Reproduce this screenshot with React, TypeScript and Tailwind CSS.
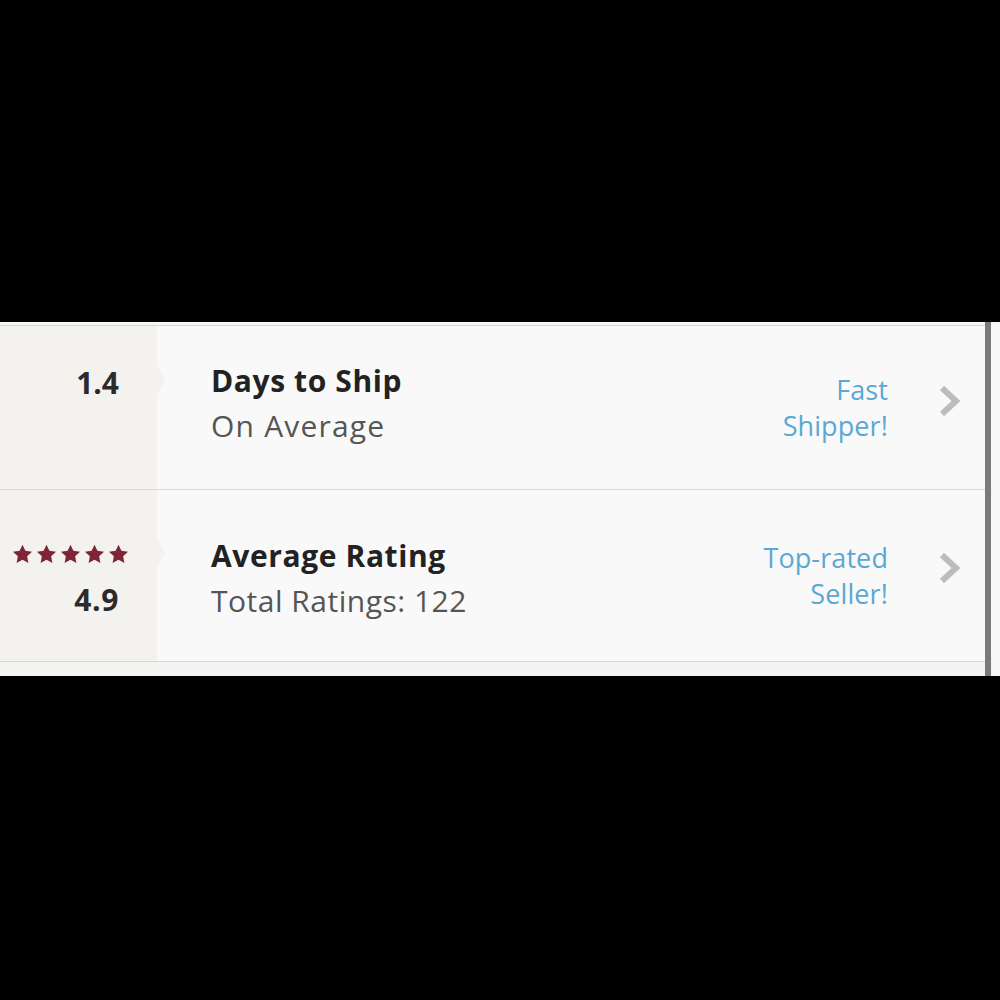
const STARS = [0, 1, 2, 3, 4];

function Star() {
  return (
    <svg width="21" height="20" viewBox="0 0 24 23" className="shrink-0">
      <path
        d="M12 0.8l3.3 7.1 7.7 0.9-5.7 5.3 1.5 7.7L12 18l-6.8 3.8 1.5-7.7L1 8.8l7.7-0.9z"
        fill="#7d2638"
      />
    </svg>
  );
}

function Chevron() {
  return (
    <svg width="24" height="34" viewBox="0 0 24 34" className="shrink-0">
      <polyline
        points="4,4 18,17 4,30"
        fill="none"
        stroke="#bdbcba"
        strokeWidth="6"
      />
    </svg>
  );
}

function Notch() {
  return (
    <div className="w-0 h-0 border-y-[15px] border-y-transparent border-l-[8px] border-l-[#f3f2ef]" />
  );
}

type RowProps = {
  height: string;
  pad: string;
  notchTop: string;
  left: React.ReactNode;
  title: string;
  subtitle: string;
  subTracking: string;
  badge: string[];
  badgePad: string;
  chevPad: string;
};

function StatRow({ height, pad, notchTop, left, title, subtitle, subTracking, badge, badgePad, chevPad }: RowProps) {
  return (
    <div className={`flex border-b border-[#d9d8d6] ${height}`}>
      <div className="w-[157px] shrink-0 bg-[#f3f2ef] pr-[38px]">{left}</div>
      <div className={`w-[54px] shrink-0 ${notchTop}`}>
        <Notch />
      </div>
      <div className={`flex-1 ${pad}`}>
        <div className="text-[30px] leading-[45px] font-bold tracking-[0.6px] text-[#222222]">{title}</div>
        <div className={`text-[30px] leading-[45px] text-[#555555] ${subTracking}`}>{subtitle}</div>
      </div>
      <div className={`text-right text-[27px] leading-[36px] tracking-[0.1px] text-[#5aa8d4] ${badgePad}`}>
        {badge.map((b) => (
          <div key={b}>{b}</div>
        ))}
      </div>
      <div className={`w-[97px] shrink-0 pl-[50px] ${chevPad}`}>
        <Chevron />
      </div>
    </div>
  );
}

export default function App() {
  return (
    <div className="h-screen w-full bg-black flex flex-col" style={{ fontFamily: "'Open Sans', Lato, sans-serif" }}>
      <div className="h-[322px] shrink-0" />
      <div className="h-[354px] shrink-0 flex bg-[#f9f9f9]">
        <div className="flex-1 flex flex-col">
          <div className="h-[4px] bg-[#f6f6f5] border-b border-[#d6d4d1]" />
          <StatRow
            height="h-[164px]"
            pad="pt-[32px]"
            notchTop="pt-[39px]"
            left={
              <div className="pt-[34px] text-right text-[30px] leading-[45px] font-bold text-[#2b2b2b]">1.4</div>
            }
            title="Days to Ship"
            subtitle="On Average"
            subTracking="tracking-[1.2px]"
            badge={["Fast", "Shipper!"]}
            badgePad="pt-[46px]"
            chevPad="pt-[58px]"
          />
          <StatRow
            height="h-[172px]"
            pad="pt-[43px]"
            notchTop="pt-[48px]"
            left={
              <div className="pt-[54px] flex flex-col items-end">
                <div className="flex gap-[3px] -mr-[10px]">
                  {STARS.map((s) => (
                    <Star key={s} />
                  ))}
                </div>
                <div className="text-[30px] leading-[45px] font-bold tracking-[0.6px] text-[#2b2b2b] mt-[13px]">4.9</div>
              </div>
            }
            title="Average Rating"
            subtitle="Total Ratings: 122"
            subTracking="tracking-[0.5px]"
            badge={["Top-rated", "Seller!"]}
            badgePad="pt-[50px]"
            chevPad="pt-[61px]"
          />
          <div className="flex-1 bg-[#f4f4f2]" />
        </div>
        <div className="w-[6px] bg-[#7a7a7a]" />
        <div className="w-[9px] bg-[#f6f6f6]" />
      </div>
    </div>
  );
}
